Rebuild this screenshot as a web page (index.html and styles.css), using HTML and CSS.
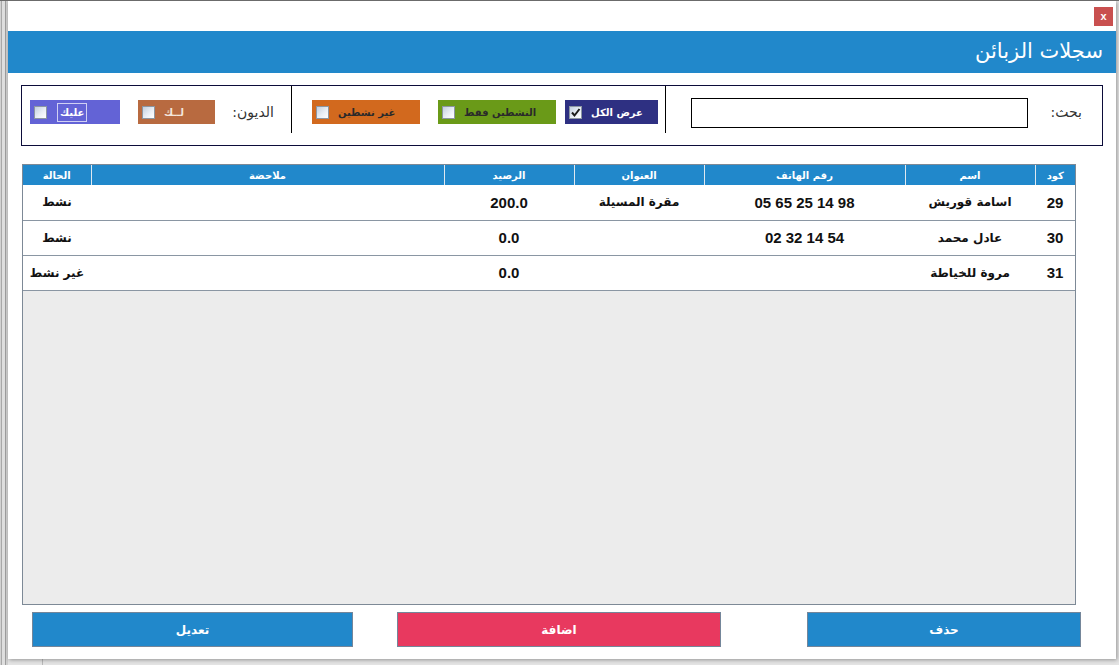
FILE: index.html
```html
<!DOCTYPE html>
<html lang="ar" dir="rtl">
<head>
<meta charset="utf-8">
<title>سجلات الزبائن</title>
<link rel="stylesheet" href="styles.css">
</head>
<body>
<div class="dialog">
  <div class="topbar">
    <button class="close" type="button">x</button>
  </div>
  <div class="titlebar">سجلات الزبائن</div>

  <div class="filters">
    <label class="lbl lbl-search">بحث:</label>
    <input class="search" type="text">
    <span class="sep sep-1"></span>
    <div class="chip chip-all">
      <span class="cb cb-on"><svg viewBox="0 0 11 11" width="11" height="11"><path d="M2 5.5 L4.5 8.5 L9.5 2" fill="none" stroke="#1b1b1b" stroke-width="2"/></svg></span>
      <span class="chip-text">عرض الكل</span>
    </div>
    <div class="chip chip-active">
      <span class="cb"></span>
      <span class="chip-text">النشطين فقط</span>
    </div>
    <div class="chip chip-inactive">
      <span class="cb"></span>
      <span class="chip-text">غير نشطين</span>
    </div>
    <span class="sep sep-2"></span>
    <label class="lbl lbl-debt">الديون:</label>
    <div class="chip chip-you">
      <span class="cb"></span>
      <span class="chip-text">لــك</span>
    </div>
    <div class="chip chip-owe">
      <span class="cb"></span>
      <span class="chip-text focus">عليك</span>
    </div>
  </div>

  <div class="grid">
    <table class="records">
      <colgroup>
        <col class="c-code"><col class="c-name"><col class="c-phone"><col class="c-addr"><col class="c-bal"><col class="c-note"><col class="c-state">
      </colgroup>
      <thead>
        <tr>
          <th>كود</th><th>اسم</th><th>رقم الهاتف</th><th>العنوان</th><th>الرصيد</th><th>ملاحضة</th><th>الحالة</th>
        </tr>
      </thead>
      <tbody>
        <tr>
          <td class="num">29</td><td>اسامة قوريش</td><td class="num"><span class="ltr">05 65 25 14 98</span></td><td>مقرة المسيلة</td><td class="num">200.0</td><td></td><td>نشط</td>
        </tr>
        <tr>
          <td class="num">30</td><td>عادل محمد</td><td class="num"><span class="ltr">02 32 14 54</span></td><td></td><td class="num">0.0</td><td></td><td>نشط</td>
        </tr>
        <tr>
          <td class="num">31</td><td>مروة للخياطة</td><td></td><td></td><td class="num">0.0</td><td></td><td>غير نشط</td>
        </tr>
      </tbody>
    </table>
  </div>

  <div class="actions">
    <button class="btn btn-blue btn-del" type="button">حذف</button>
    <button class="btn btn-red btn-add" type="button">اضافة</button>
    <button class="btn btn-blue btn-edit" type="button">تعديل</button>
  </div>
</div>
</body>
</html>
```

FILE: styles.css
```css
* { box-sizing: border-box; }

html, body { margin: 0; padding: 0; }

body {
  width: 1119px;
  height: 665px;
  overflow: hidden;
  font-family: "Liberation Sans", "DejaVu Sans", sans-serif;
  border-top: 1px solid #6b6b6b;
  padding: 0 3px 6px 8px;
  display: flex;
  background:
    linear-gradient(to right, #d2d2d2 0 1px, #a8a8a8 1px 2px, #dedede 2px 5px, #9e9e9e 5px 6px, #cfcfcf 6px 8px) left top / 8px 100% no-repeat,
    linear-gradient(to right, #b9b9b9 0 1px, transparent 1px) 42px bottom / 1px 6px no-repeat,
    #e4e4e4;
}

.dialog {
  flex: 1;
  background: #fff;
  display: flex;
  flex-direction: column;
  box-shadow: 1px 1px 4px rgba(0, 0, 0, 0.35);
}

.topbar {
  height: 30px;
  display: flex;
  align-items: flex-start;
}

.close {
  margin: 6px 0 0 0;
  margin-right: 3px;
  width: 19px;
  height: 19px;
  padding: 0;
  border: none;
  background: #c9504f;
  color: #fff;
  font: bold 11px "Liberation Sans", sans-serif;
  line-height: 17px;
}

.titlebar {
  height: 42px;
  background: #2188cb;
  color: #fff;
  font-family: "DejaVu Sans", sans-serif;
  font-size: 21px;
  padding-right: 13px;
  padding-bottom: 2px;
  display: flex;
  align-items: center;
}

/* filter panel */
.filters {
  margin: 12px 13px 0 13px;
  height: 61px;
  border: 1px solid #0c0c3a;
  padding-right: 20px;
  display: flex;
  align-items: flex-start;
}

.lbl {
  margin-top: 14px;
  height: 24px;
  line-height: 24px;
  font-family: "DejaVu Sans", sans-serif;
  font-size: 14px;
  color: #333;
  white-space: nowrap;
  text-align: right;
}

.lbl-search { width: 38px; }
.lbl-debt { width: 43px; margin-right: 17px; }

.search {
  margin: 12px 16px 0 0;
  width: 337px;
  height: 30px;
  border: 1px solid #000;
  padding: 0;
  background: #fff;
}

.sep {
  width: 1px;
  height: 47px;
  background: #000;
}

.sep-1 { margin-right: 25px; }
.sep-2 { margin-right: 20px; }

.chip {
  direction: ltr;
  margin-top: 14px;
  height: 24px;
  display: flex;
  align-items: center;
  padding-left: 4px;
  gap: 9px;
  font-family: "DejaVu Sans", sans-serif;
  font-size: 10px;
  font-weight: bold;
  white-space: nowrap;
  overflow: hidden;
}

.chip-text { direction: rtl; }

.chip-all { width: 93px; margin-right: 7px; background: #2e3082; color: #fff; }
.chip-active { width: 118px; margin-right: 9px; background: #6a9a18; color: #2a2a2a; }
.chip-inactive { width: 108px; margin-right: 18px; background: #d2691e; color: #2a2a2a; }
.chip-you { width: 77px; margin-right: 16px; background: #b86a40; color: #f3e6dc; }
.chip-owe { width: 90px; margin-right: 18px; background: #6363d6; color: #fff; }

.cb {
  flex: none;
  width: 13px;
  height: 13px;
  border: 1px solid #8c96a2;
  background: linear-gradient(135deg, #c3cfdf 0%, #e9eef5 55%, #ffffff 100%);
  display: flex;
  align-items: center;
  justify-content: center;
}

.focus {
  border: 1px solid rgba(255, 255, 255, 0.7);
  padding: 1px 2px;
  line-height: 15px;
  margin-left: 1px;
}

/* records grid */
.grid {
  margin: 18px 40px 0 14px;
  height: 441px;
  border: 1px solid #7d8996;
  background: #ececec;
}

.records {
  width: 100%;
  table-layout: fixed;
  border-collapse: collapse;
  border-spacing: 0;
}

.c-code { width: 40px; }
.c-name { width: 130px; }
.c-phone { width: 201px; }
.c-addr { width: 130px; }
.c-bal { width: 130px; }
.c-note { width: 353px; }
.c-state { width: 68px; }

.records th {
  height: 20px;
  padding: 0;
  background: #2188cb;
  color: #fff;
  font-family: "DejaVu Sans", sans-serif;
  font-size: 10px;
  font-weight: bold;
  text-align: center;
  border-left: 1px solid #dfe8f0;
}

.records th:last-child { border-left: none; }

.records td {
  height: 35px;
  padding: 0;
  background: #fff;
  border-bottom: 1px solid #8a96a3;
  text-align: center;
  font-family: "DejaVu Sans", sans-serif;
  font-size: 12px;
  font-weight: bold;
  color: #111;
  white-space: nowrap;
}

.records td.num {
  font-family: "Liberation Sans", sans-serif;
  font-size: 15px;
}

.ltr {
  direction: ltr;
  unicode-bidi: isolate;
}

/* bottom buttons */
.actions {
  margin-top: 7px;
  height: 35px;
  display: flex;
  padding-right: 35px;
}

.btn {
  height: 35px;
  border: 1px solid #74869a;
  color: #fff;
  font-family: "DejaVu Sans", sans-serif;
  font-size: 12px;
  font-weight: bold;
  padding: 0;
}

.btn-blue { background: #2188cb; }
.btn-red { background: #e8395f; }

.btn-del { width: 274px; }
.btn-add { width: 324px; margin-right: 86px; }
.btn-edit { width: 321px; margin-right: 44px; }
```
